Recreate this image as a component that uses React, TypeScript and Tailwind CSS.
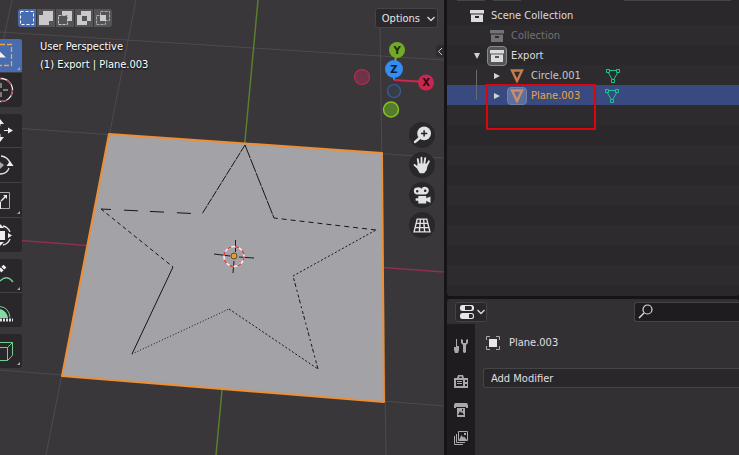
import type { ReactNode } from 'react';
import clsx from 'clsx';

const modes = ['set', 'extend', 'subtract', 'difference', 'intersect'];

const stroke = { fill: 'none', strokeWidth: 1 };

function ModeIcon({ name }: { name: string }) {
  return (
    <svg viewBox="0 0 18 18" className="size-[18px]">
      {name === 'set' && <rect x="2.5" y="2.5" width="13" height="13" stroke="#fff" strokeDasharray="3 2" {...stroke} />}
      {name === 'extend' && <path d="M6 2h10v10h-4v4H2V6h4z" fill="#c9c8ca" />}
      {name === 'subtract' && (
        <>
          <path d="M6 2h10v10h-4V6H6z" fill="#c9c8ca" />
          <path d="M2.500 6.500h9v9h-9z" stroke="#c9c8ca" strokeDasharray="3 1" {...stroke} />
        </>
      )}
      {name === 'difference' && <path fillRule="evenodd" d="M6 2h10v10h-4v4H2V6h4zM7 7v5h5V7z" fill="#c9c8ca" />}
      {name === 'intersect' && (
        <>
          <path d="M6.500 2.500h9v9h-4v4h-9v-9h4z" stroke="#a9a8aa" strokeDasharray="3 1" {...stroke} />
          <path d="M6 6h6v6H6z" fill="#c9c8ca" />
        </>
      )}
    </svg>
  );
}

// Scene: grid, axes, the selected plane and its star cut-out
function Scene() {
  return (
    <svg viewBox="0 0 444 455" preserveAspectRatio="xMinYMin slice" className="absolute inset-0 h-full w-full" fill="none">
      <g stroke="#4c4b4e">
        <path d="M0 32L444 60M0 127L444 158M0 370L444 406" />
        <path d="M12 0L0 56M136 0L46 455M380 26L386 455" />
      </g>
      <path d="M0 239L444 272" stroke="#8f2f4b" strokeWidth="1.500" />
      <path d="M258 0L216 455" stroke="#587f2b" strokeWidth="1.500" />
      <path d="M109 134L382 153L384 402L62 376Z" fill="#a3a2a6" stroke="#ee8e35" strokeWidth="2" strokeLinejoin="round" />
      <g stroke="#161616">
        <path d="M245 145L202 214" strokeDasharray="8 1" />
        <path d="M245 145L274 218" strokeDasharray="14 1" />
        <path d="M101 209L202 214" strokeDasharray="10 13 14 12 14 13 14 99" />
        <path d="M101 209L173 267" strokeDasharray="4 3" />
        <path d="M173 267L132 354" />
        <path d="M132 354L229 309" strokeDasharray="1 2" />
        <path d="M229 309L318 369" strokeDasharray="2 2" />
        <path d="M318 369L293 276" strokeDasharray="4 2 3 3 2 3" />
        <path d="M293 276L376 230" strokeDasharray="2 2" />
        <path d="M376 230L274 218" strokeDasharray="5 4" />
      </g>
      <path d="M214 254L230 256M239 257L254 258M235.500 240V252M234 261L233 273" stroke="#1c1c1c" />
      <circle cx="234" cy="256.500" r="10" stroke="#eee" strokeWidth="1.500" />
      <circle cx="234" cy="256.500" r="10" stroke="#e03545" strokeWidth="1.500" strokeDasharray="4 4" />
      <circle cx="234" cy="256" r="3" fill="#f09a2d" stroke="#5d4a35" />
    </svg>
  );
}

function AxisGizmo() {
  return (
    <svg viewBox="0 0 84 80" className="absolute right-2 top-10 h-20 w-[84px]" fontFamily="DejaVu Sans" fontSize="10" fontWeight="bold" textAnchor="middle">
      <path d="M45 10L42 29" stroke="#78ad24" strokeWidth="2" />
      <path d="M42 29V40" stroke="#338df2" strokeWidth="2" />
      <path d="M42 40L74 42" stroke="#cc2850" strokeWidth="2" />
      <circle cx="10" cy="37" r="7.500" fill="#703248" stroke="#bb2b50" strokeWidth="1.200" />
      <circle cx="42" cy="51" r="6.500" fill="#363d4a" stroke="#35629a" strokeWidth="1.200" />
      <circle cx="39" cy="69.500" r="7.500" fill="#587a2e" stroke="#80c621" strokeWidth="1.500" />
      <circle cx="45" cy="10" r="8" fill="#72a926" />
      <text x="45" y="14" fill="#1e2b12">Y</text>
      <circle cx="74" cy="42.500" r="8" fill="#c8274f" />
      <text x="74" y="46" fill="#2d0b15">X</text>
      <circle cx="42" cy="29" r="9" fill="#338df2" />
      <text x="42" y="33" fill="#0b1e38">Z</text>
    </svg>
  );
}

const navIcons: { label: string; icon: ReactNode }[] = [
  {
    label: 'Zoom',
    icon: (
      <>
        <circle cx="10.500" cy="7" r="6.500" />
        <path d="M6.500 11L2 15" stroke="#e2e1e3" strokeWidth="2.500" strokeLinecap="round" />
        <path d="M10.500 4v6M7.500 7h6" stroke="#222" strokeWidth="1.400" />
      </>
    ),
  },
  {
    label: 'Pan',
    icon: (
      <path
        d="M5.500 9L4.500 3M8 8.500V1.500M10.500 8.500L11.500 2M12.500 10L15 5M5.500 12L1.500 8.500M5 8h8l-1 5-2 2.500H7L5 12z"
        stroke="#e2e1e3"
        strokeWidth="1.800"
        strokeLinecap="round"
        strokeLinejoin="round"
      />
    ),
  },
  {
    label: 'Camera view',
    icon: (
      <>
        <path
          fillRule="evenodd"
          d="M4 1.500a3.200 3.200 0 1 0 .1 6.500H12a3.700 3.700 0 1 0-4-5.500A3.200 3.200 0 0 0 4 1.500zm0 2.200a1.200 1.200 0 1 1 0 2.400 1.200 1.200 0 0 1 0-2.400zm7.500-.500a1.200 1.200 0 1 1 0 2.400 1.200 1.200 0 0 1 0-2.400z"
        />
        <path d="M5 9.500h7.500v2l4-1.500v6l-4-2v2.500H5V14H2.500v-2.500H5z" />
      </>
    ),
  },
  {
    label: 'Perspective',
    icon: <path d="M4 3h9l3 12H1zM3 7h11M2 11h13M7 3L6 15M10 3l1 12" fill="none" stroke="#e2e1e3" strokeWidth="1.300" />,
  },
];

const toolGroups: { label: string; height: string; more?: boolean; icon: ReactNode }[][] = [
  [
    {
      label: 'Select box',
      height: 'h-[33px]',
      more: true,
      icon: (
        <>
          <path d="M0 5.500h11.500v21H0" stroke="#f0a540" strokeWidth="1.300" strokeDasharray="5 2" />
          <path d="M-4 9L6 18.500H0L-4 22z" fill="#f1f1f1" />
        </>
      ),
    },
    {
      label: 'Cursor',
      height: 'h-[34px]',
      icon: (
        <>
          <circle cx="1" cy="17" r="11.500" stroke="#eee" strokeWidth="1.300" />
          <circle cx="1" cy="17" r="11.500" stroke="#b5475d" strokeWidth="1.300" strokeDasharray="6 6" />
          <path d="M1 10v5M1 19v5M3 17h5" stroke="#999" strokeWidth="1.500" />
        </>
      ),
    },
  ],
  [
    {
      label: 'Move',
      height: 'h-[33px]',
      icon: (
        <>
          <path d="M0 8v4M0 20v5M4 16.500h5" stroke="#e6e6e6" />
          <path d="M8 13.500v6l5-3zM-3 10h7L0 5zM-3 23h7l-4 5z" fill="#eee" />
        </>
      ),
    },
    {
      label: 'Rotate',
      height: 'h-[34px]',
      icon: (
        <>
          <path d="M0 14l4 3-4 4z" fill="#aaa" />
          <path d="M1 8q7 1 9 7M9 20q-2 6-9 6" stroke="#e6e6e6" strokeWidth="1.300" />
          <path d="M6.500 18h7L10 13z" fill="#eee" />
        </>
      ),
    },
    {
      label: 'Scale',
      height: 'h-[34px]',
      more: true,
      icon: (
        <>
          <path d="M0 9.500h9.500v16H0" stroke="#aaa" />
          <path d="M0 18.500h1V26H0" fill="#eee" />
          <path d="M1 18l5-5" stroke="#eee" strokeWidth="1.500" />
          <path d="M3 12h4v4z" fill="#eee" />
        </>
      ),
    },
    {
      label: 'Transform',
      height: 'h-[34px]',
      icon: (
        <>
          <path d="M0 13h5v9H0z" fill="#eee" />
          <path d="M3 8q5 1 7 6M10 21q-2 5-7 6" stroke="#e6e6e6" strokeWidth="1.300" />
          <path d="M8 15v5l4-2.500zM0 6l4 4H0zM0 28l4-4H0z" fill="#eee" />
        </>
      ),
    },
  ],
  [
    {
      label: 'Annotate',
      height: 'h-[33px]',
      more: true,
      icon: (
        <>
          <path d="M0 12L5 7" stroke="#eee" strokeWidth="4" strokeDasharray="3 1" />
          <path d="M0 22Q7 15 13 23" stroke="#73cc92" strokeWidth="1.300" />
        </>
      ),
    },
    {
      label: 'Measure',
      height: 'h-[34px]',
      icon: (
        <>
          <path d="M0 16q7 2 8 9H0z" fill="#85d9a3" />
          <path d="M0 13.500q9 1 10 11" stroke="#73cc92" />
          <path d="M0 27h13" stroke="#ddd" strokeWidth="3" strokeDasharray="2 1" />
        </>
      ),
    },
  ],
  [
    {
      label: 'Add cube',
      height: 'h-[34px]',
      more: true,
      icon: <path d="M0 13.500h7.500v13H0M7.500 13.500l5-5M0 8.500h12.500v13l-5 5" stroke="#73cc92" />,
    },
  ],
];

function Viewport() {
  return (
    <section aria-label="3D viewport" className="relative overflow-hidden bg-[#39373a]">
      <Scene />
      <div className="absolute left-[18px] top-[9px] flex gap-px overflow-hidden rounded-[3px]">
        {modes.map((name) => (
          <button key={name} aria-label={name} className={clsx('h-[18px]', name === 'set' ? 'bg-[#476cb0]' : 'bg-[#545356]')}>
            <ModeIcon name={name} />
          </button>
        ))}
      </div>
      <button className="absolute right-1.5 top-2 flex h-5 items-center gap-1.5 rounded-[3px] border border-[#454447] bg-[#2a282b] pl-1.5 pr-px pt-0.5 text-[#e6e6e6]">
        Options
        <svg viewBox="0 0 10 10" className="size-2.5" fill="none" stroke="#ddd" strokeWidth="1.300">
          <path d="M1.500 3l3.500 3.500L8.500 3" />
        </svg>
      </button>
      <div className="absolute left-10 top-[38px] leading-[18px] text-white [text-shadow:0_1px_2px_#000]">
        <p>User Perspective</p>
        <p>(1) Export | Plane.003</p>
      </div>
      <div className="absolute left-0 top-[39px] flex flex-col gap-[7px]">
        {toolGroups.map((group) => (
          <div key={group[0].label} className="flex w-[22px] flex-col gap-px overflow-hidden rounded-r-[3px] bg-[#414043]">
            {group.map((tool) => (
              <button
                key={tool.label}
                aria-label={tool.label}
                className={clsx(tool.height, tool.label === 'Select box' ? 'bg-[#476cb0]' : 'bg-[#29272a]')}
              >
                <svg viewBox="0 0 22 34" className="h-[34px] w-[22px]" fill="none">
                  {tool.icon}
                  {tool.more && <path d="M20 28v3h-3z" fill="#aaa" />}
                </svg>
              </button>
            ))}
          </div>
        ))}
      </div>
      <AxisGizmo />
      <button aria-label="Show sidebar" className="absolute right-0 top-[45px] h-3 w-2 rounded-l-[3px] bg-[#2d2b2e]">
        <svg viewBox="0 0 8 12" className="h-3 w-2" fill="none" stroke="#ccc">
          <path d="M6 3L2.500 6.500 6 10" />
        </svg>
      </button>
      <div className="absolute right-[9px] top-[122px] flex flex-col gap-1">
        {navIcons.map(({ label, icon }) => (
          <button key={label} aria-label={label} className="flex size-[26px] items-center justify-center rounded-full bg-[#29272a]">
            <svg viewBox="0 0 17 17" className="size-[18px]" fill="#e2e1e3">
              {icon}
            </svg>
          </button>
        ))}
      </div>
    </section>
  );
}

function CollectionIcon({ boxed }: { boxed?: boolean }) {
  return (
    <span className={clsx('flex size-5 items-center justify-center rounded-[4px]', boxed && 'border border-[#8a898b] bg-[#555457]')}>
      <svg viewBox="0 0 14 14" className="size-3.5 shrink-0" fill="currentColor">
        <path fillRule="evenodd" d="M0 1h14v3.500H0zM1 5.500h12V13H1zM5 7v2h4V7z" />
      </svg>
    </span>
  );
}

function ObjectIcon({ boxed }: { boxed?: boolean }) {
  return (
    <span className={clsx('flex h-[18px] w-5 items-center justify-center rounded-[4px]', boxed && 'border border-[#7081ab] bg-[#5d6f9e]')}>
      <svg viewBox="0 0 14 14" className="size-3.5 shrink-0" fill="none" stroke={boxed ? '#d08a68' : '#c97b45'} strokeWidth="2.400">
        <path d="M2 1.500h10L7 12z" />
      </svg>
    </span>
  );
}

function Arrow({ open }: { open?: boolean }) {
  return (
    <svg viewBox="0 0 10 10" className="size-2.5" fill="#d2d1d3">
      <path d={open ? 'M2 2h6L5 8z' : 'M2 2v6l6-3z'} />
    </svg>
  );
}

function MeshIcon() {
  return (
    <svg viewBox="0 0 14 14" className="size-3.5" fill="none" stroke="#1dc690">
      <path d="M.5.500h3v3h-3zM10.500.500h3v3h-3zM5.500 10.500h3v3h-3zM4 1.500h6M2.500 4L6 10M11.500 4L8 10" />
    </svg>
  );
}

function Outliner() {
  return (
    <section aria-label="Outliner" className="relative min-h-0 flex-1 overflow-hidden rounded-b-[3px] bg-[#2a282b]">
      <div className="flex h-[5px] gap-2 pl-2.5">
        <span className="h-px w-7 bg-[#454447]" />
        <span className="h-px w-7 bg-[#454447]" />
        <span className="ml-auto mr-2 h-px w-[107px] bg-[#454447]" />
      </div>
      <ul className="text-[#c9c8ca] [&>li]:flex [&>li]:h-5 [&>li]:items-center [&>li]:pt-0.5 [&>li:nth-child(even)]:bg-[#2d2b2e]">
        <li className="gap-1 pl-5 text-[#dcdbdd]">
          <CollectionIcon />
          Scene Collection
        </li>
        <li className="gap-1 pl-10 text-[#737275]">
          <CollectionIcon />
          Collection
        </li>
        <li className="gap-1 pl-[25px] text-[#dcdbdd]">
          <button aria-label="Collapse Export" className="mr-px">
            <Arrow open />
          </button>
          <CollectionIcon boxed />
          Export
        </li>
        <li className="gap-1 pl-[45px]">
          <button aria-label="Expand Circle.001" className="mr-px">
            <Arrow />
          </button>
          <ObjectIcon />
          <span className="mr-[21px]">Circle.001</span>
          <MeshIcon />
        </li>
        <li className="gap-1 bg-[#384a7f] pl-[45px] text-[#f0a540]">
          <button aria-label="Expand Plane.003" className="mr-px">
            <Arrow />
          </button>
          <ObjectIcon boxed />
          <span className="mr-[21px]">Plane.003</span>
          <MeshIcon />
        </li>
        {Array.from({ length: 9 }).map((_, i) => (
          <li key={i} />
        ))}
      </ul>
      <span className="absolute left-[29px] top-[70px] h-[30px] w-px bg-[#69686b]" />
      {/* Highlight around the active object */}
      <span className="absolute left-[39px] top-[84px] h-[46px] w-[110px] border-2 border-[#dc040d]" />
    </section>
  );
}

const tabs: { label: string; icon: ReactNode }[] = [
  {
    label: 'Tool',
    icon: <path d="M2 0h1v7h2v4l-1 3H1l-1-3V8h2zM7 0v4l2 2v7q1.500 2 3 0V6l2-2V0l-2 1v3H9V1z" />,
  },
  {
    label: 'Render',
    icon: <path fillRule="evenodd" d="M3 3l1-3h5l1 3h4v10H0V3zM5 3h3l-.500-1.500h-2zM2 5v6h7V5zM11 5v2h2V5zM11 9v2h2V9zM3 6h5v1H3zM3 8h5v1H3z" />,
  },
  {
    label: 'Output',
    icon: <path fillRule="evenodd" d="M1 0h12l1 2v3h-2V4H2v1H0V2zM3 5h8v9H3zM4 12h6L8 9l-1 1-1-2zM8 6v2h1V6z" />,
  },
  {
    label: 'View layer',
    icon: (
      <>
        <path d="M4.500.500h9v9h-9zM2.500 3v8.500H11M.500 5v8.500H9" fill="none" stroke="#a9a8aa" />
        <path d="M5 9l2.500-5L9 6.500l1-1L13 9zM10 2h2v2h-2z" />
      </>
    ),
  },
];

function Properties() {
  return (
    <section aria-label="Properties" className="flex h-[156px] shrink-0 flex-col overflow-hidden rounded-t-[3px] bg-[#323033]">
      <header className="flex h-[25px] items-center justify-between pl-2">
        <button aria-label="Editor type" className="flex h-5 w-8 items-center gap-0.5 rounded-[3px] border border-[#454447] bg-[#29272a] pl-1">
          <svg viewBox="0 0 14 14" className="size-3.5" fill="#e6e6e6">
            <rect width="14" height="6" rx="2.500" />
            <rect y="8" width="14" height="6" rx="2.500" />
            <path d="M5 1h6q2 2 0 4H5zM9 9h3q2 2 0 4H9z" fill="#29272a" />
          </svg>
          <svg viewBox="0 0 10 10" className="size-2.5" fill="none" stroke="#ddd" strokeWidth="1.300">
            <path d="M1.500 3l3.500 3.500L8.500 3" />
          </svg>
        </button>
        <label className="flex h-5 w-[105px] items-center rounded-l-[3px] border border-r-0 border-[#454447] bg-[#1e1c1f] pl-[3px]">
          <svg viewBox="0 0 15 15" className="size-[15px] shrink-0" fill="none" stroke="#dcdbdd" strokeWidth="1.200">
            <circle cx="9.500" cy="5.500" r="4.500" />
            <path d="M6 9L1 14" strokeWidth="1.500" />
          </svg>
          <input type="text" aria-label="Search" className="w-full min-w-0 bg-transparent outline-none" />
        </label>
      </header>
      <div className="flex min-h-0 flex-1">
        <nav className="flex w-7 flex-col items-center gap-3.5 bg-[#1e1c1f] pt-[15px]">
          {tabs.map(({ label, icon }) => (
            <button key={label} aria-label={label} className={clsx('size-3.5 shrink-0', label === 'Tool' && 'mb-2')}>
              <svg viewBox="0 0 14 14" className="size-3.5" fill="#a9a8aa">
                {icon}
              </svg>
            </button>
          ))}
        </nav>
        <div className="flex-1 pl-2 pt-2 text-[#e0dfe1]">
          <div className="flex h-5 items-center gap-[9px] pl-[3px] pt-0.5">
            <svg viewBox="0 0 14 14" className="size-3.5" fill="none" stroke="#aaa9ab">
              <path d="M.500 4V.500H4M10 .500h3.500V4M13.500 10v3.500H10M4 13.500H.500V10" />
              <path d="M3 3h8v8H3z" fill="#e8e7e9" stroke="none" />
            </svg>
            Plane.003
          </div>
          <button className="mt-4 flex h-5 w-full items-center rounded-l-[3px] border border-r-0 border-[#454447] bg-[#29272a] pl-[7px] pt-0.5">
            Add Modifier
          </button>
        </div>
      </div>
    </section>
  );
}

export default function App() {
  return (
    <main className="grid h-screen grid-cols-[444fr_295fr] bg-[#161417] font-['DejaVu_Sans_Condensed','DejaVu_Sans',sans-serif] text-[11px]">
      <Viewport />
      <div className="flex min-h-0 min-w-0 flex-col gap-[3px] pl-[3px]">
        <Outliner />
        <Properties />
      </div>
    </main>
  );
}
